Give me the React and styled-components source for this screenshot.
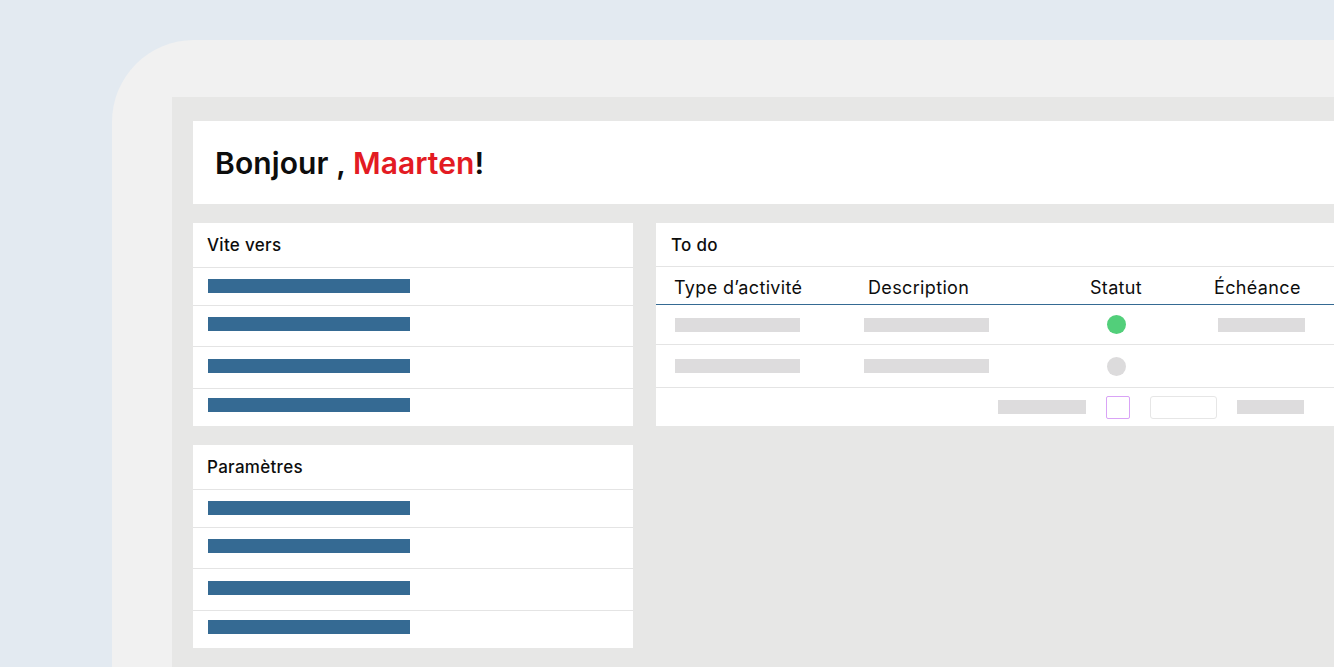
import React from 'react';
import styled, { createGlobalStyle } from 'styled-components';

const GlobalStyle = createGlobalStyle`
  *, *::before, *::after {
    box-sizing: border-box;
  }
  body {
    margin: 0;
    font-family: 'Inter', 'Lato', sans-serif;
    color: #0d0d0d;
  }
`;

const Page = styled.div`
  height: 667px;
  overflow: hidden;
  background-color: #e3eaf1;
  padding: 40px 0 0 112px;
`;

const Device = styled.div`
  height: 100%;
  background-color: #f1f1f1;
  border-top-left-radius: 82px;
  padding: 57px 0 0 60px;
`;

const Screen = styled.div`
  height: 100%;
  background-color: #e7e7e6;
  padding: 24px 0 0 21px;
  display: flex;
  flex-direction: column;
  gap: 19px;
`;

const Welcome = styled.div`
  height: 83px;
  background-color: #fff;
  display: flex;
  align-items: center;
  padding: 1px 0 0 22px;
`;

const Greeting = styled.h1`
  margin: 0;
  font-size: 30px;
  font-weight: 600;
  letter-spacing: 0.1px;
  white-space: pre;
`;

const Name = styled.span`
  color: #e31b23;
`;

const Main = styled.div`
  display: grid;
  grid-template-columns: 440px 1fr;
  column-gap: 23px;
  align-items: start;
`;

const Column = styled.div`
  display: flex;
  flex-direction: column;
  gap: 19px;
`;

const Card = styled.div`
  background-color: #fff;
`;

const CardTitle = styled.div`
  height: ${props => props.$h || 45}px;
  display: flex;
  align-items: center;
  padding-left: ${props => props.$pad || 14}px;
  font-size: 17px;
  font-weight: 500;
  letter-spacing: 0.3px;
  border-bottom: 1px solid #e4e4e4;
`;

const LinkRow = styled.div`
  height: ${props => props.$h}px;
  padding: ${props => props.$top}px 0 0 15px;
  border-bottom: ${props => props.$last ? 'none' : '1px solid #e4e4e4'};
`;

const LinkBar = styled.div`
  width: 202px;
  height: 14px;
  background-color: #356a93;
`;

const TableRow = styled.div`
  height: ${props => props.$h}px;
  display: grid;
  grid-template-columns: 189px 222px 60px 1fr;
  align-items: center;
  padding-left: 19px;
  padding-top: ${props => props.$head ? 3 : 0}px;
  border-bottom: 1px solid ${props => props.$head ? '#356a93' : '#e4e4e4'};
`;

const HeadCell = styled.div`
  font-size: 18px;
  letter-spacing: 0.35px;
  margin-left: ${props => props.$shift || 0}px;
  text-align: ${props => props.$center ? 'center' : 'left'};
  white-space: nowrap;
`;

const Cell = styled.div`
  display: flex;
  justify-content: ${props => props.$center ? 'center' : 'flex-start'};
  padding-left: ${props => props.$pad || 0}px;
`;

const GreyBar = styled.div`
  width: ${props => props.$w}px;
  height: 14px;
  background-color: #dddcdd;
`;

const Dot = styled.div`
  width: 19px;
  height: 19px;
  border-radius: 50%;
  background-color: ${props => props.$on ? '#52cf7a' : '#dcdbdc'};
`;

const FooterRow = styled.div`
  height: 38px;
  display: flex;
  align-items: center;
  gap: 20px;
  padding-left: 342px;
`;

const CheckBox = styled.div`
  width: 24px;
  height: 23px;
  border: 1px solid #d9a3f6;
  border-radius: 2px;
`;

const InputBox = styled.div`
  width: 67px;
  height: 23px;
  border: 1px solid #e6e6e6;
  border-radius: 3px;
`;

const linkRows = [
  { h: 38, top: 11 },
  { h: 41, top: 11 },
  { h: 42, top: 12 },
  { h: 37, top: 9 },
];

const LinkCard = ({ title }) => (
  <Card>
    <CardTitle>{title}</CardTitle>
    {linkRows.map((row, i) => (
      <LinkRow key={i} $h={row.h} $top={row.top} $last={i === linkRows.length - 1}>
        <LinkBar />
      </LinkRow>
    ))}
  </Card>
);

const App = () => (
  <>
    <GlobalStyle />
    <Page>
      <Device>
        <Screen>
          <Welcome>
            <Greeting>
              {'Bonjour , '}<Name>Maarten</Name>!
            </Greeting>
          </Welcome>
          <Main>
            <Column>
              <LinkCard title="Vite vers" />
              <LinkCard title="Paramètres" />
            </Column>
            <Card>
              <CardTitle $h={44} $pad={15}>To do</CardTitle>
              <TableRow $h={38} $head>
                <HeadCell $shift={-1}>Type d’activité</HeadCell>
                <HeadCell $shift={4}>Description</HeadCell>
                <HeadCell $center>Statut</HeadCell>
                <HeadCell $shift={68}>Échéance</HeadCell>
              </TableRow>
              <TableRow $h={40}>
                <Cell><GreyBar $w={125} /></Cell>
                <Cell><GreyBar $w={125} /></Cell>
                <Cell $center><Dot $on /></Cell>
                <Cell $pad={72}><GreyBar $w={87} /></Cell>
              </TableRow>
              <TableRow $h={43}>
                <Cell><GreyBar $w={125} /></Cell>
                <Cell><GreyBar $w={125} /></Cell>
                <Cell $center><Dot /></Cell>
                <Cell />
              </TableRow>
              <FooterRow>
                <GreyBar $w={88} />
                <CheckBox />
                <InputBox />
                <GreyBar $w={67} />
              </FooterRow>
            </Card>
          </Main>
        </Screen>
      </Device>
    </Page>
  </>
);

export default App;
